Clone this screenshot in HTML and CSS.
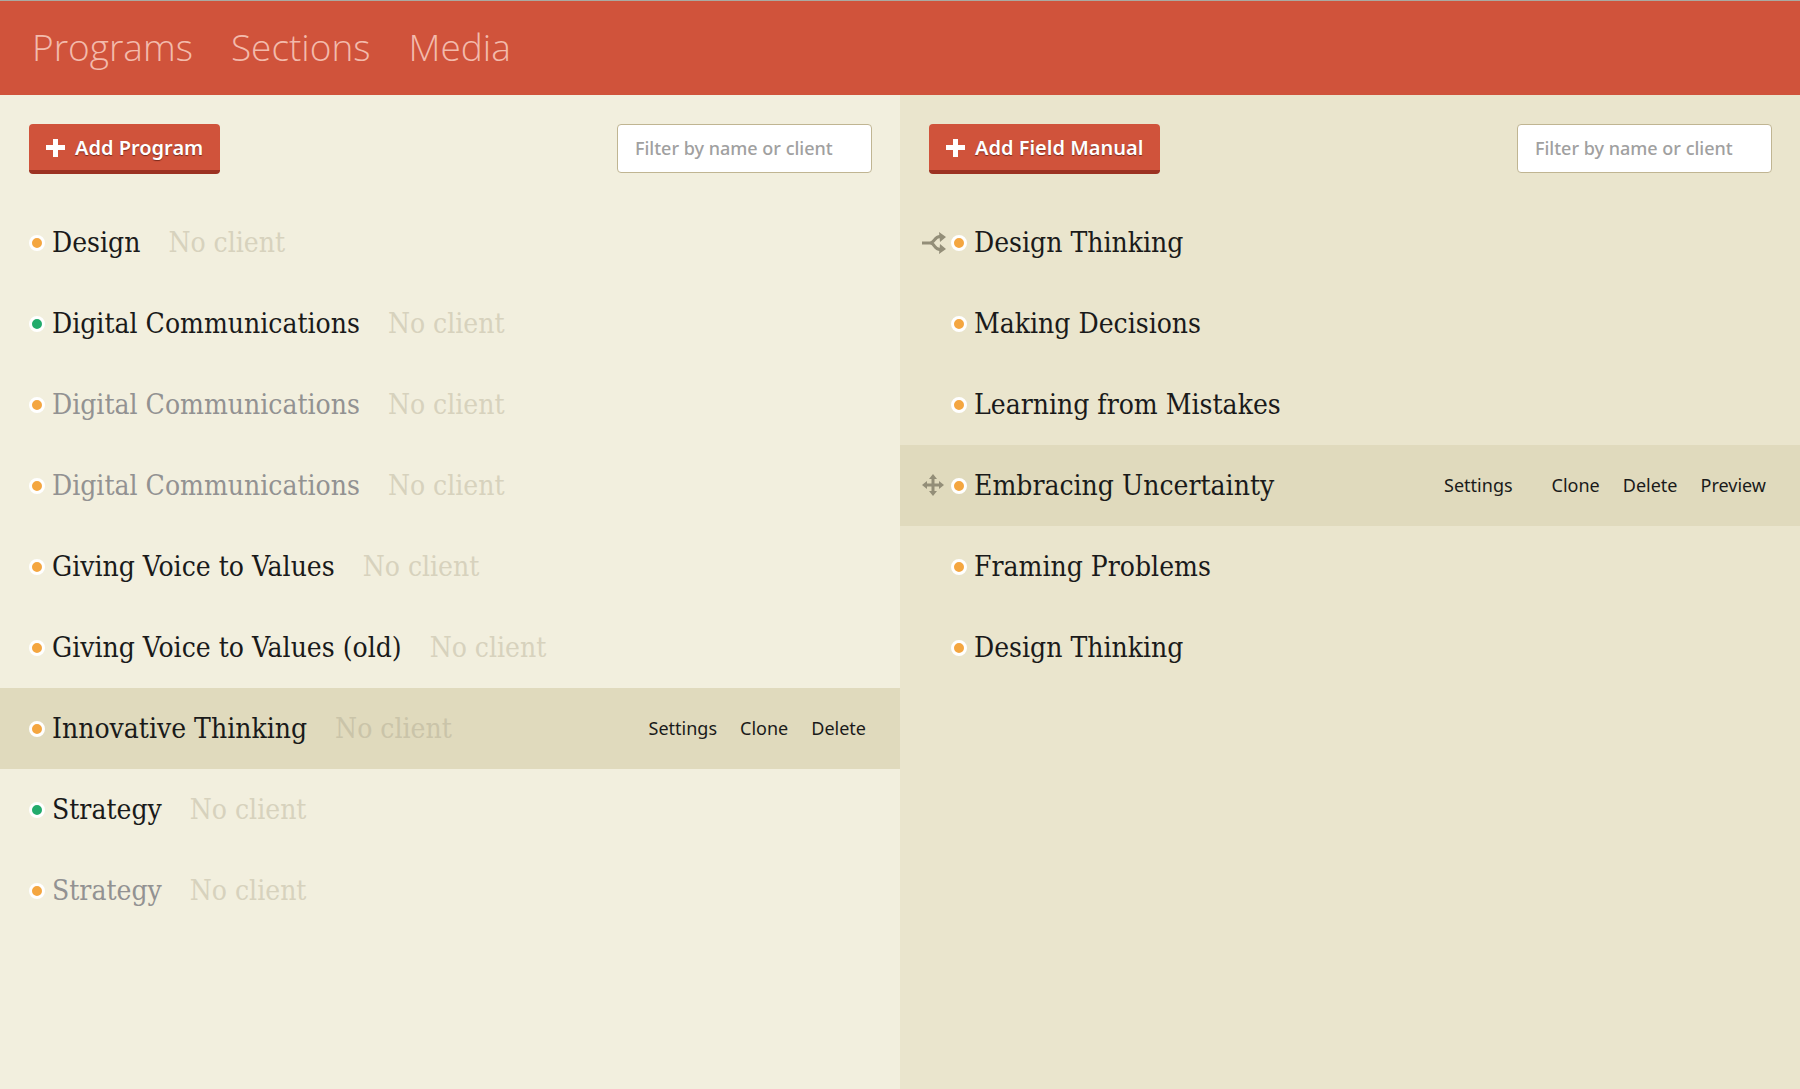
FILE: index.html
```html
<!DOCTYPE html>
<html lang="en">
<head>
<meta charset="utf-8">
<meta name="viewport" content="width=device-width, initial-scale=1">
<title>Programs</title>
<link rel="stylesheet" href="styles.css">
</head>
<body>
<header class="topbar">
  <nav class="topnav" aria-label="Main">
    <a href="#programs">Programs</a>
    <a href="#sections">Sections</a>
    <a href="#media">Media</a>
  </nav>
</header>
<main class="columns">
  <section class="panel" aria-label="Programs">
    <div class="toolbar">
      <button class="add" type="button"><svg class="plus" viewBox="0 0 20 20" aria-hidden="true"><path d="M7 1h5v6h7v5h-7v7H7v-7H0V7h7z"/></svg>Add Program</button>
      <input class="filter" type="text" placeholder="Filter by name or client" aria-label="Filter programs by name or client">
    </div>
    <ul class="list">
      <li class="row"><span class="dot"></span><a class="name" href="#p1">Design</a><span class="client">No client</span></li>
      <li class="row"><span class="dot live"></span><a class="name" href="#p2">Digital Communications</a><span class="client">No client</span></li>
      <li class="row"><span class="dot"></span><a class="name muted" href="#p3">Digital Communications</a><span class="client">No client</span></li>
      <li class="row"><span class="dot"></span><a class="name muted" href="#p4">Digital Communications</a><span class="client">No client</span></li>
      <li class="row"><span class="dot"></span><a class="name" href="#p5">Giving Voice to Values</a><span class="client">No client</span></li>
      <li class="row"><span class="dot"></span><a class="name" href="#p6">Giving Voice to Values (old)</a><span class="client">No client</span></li>
      <li class="row current"><span class="dot"></span><a class="name" href="#p7">Innovative Thinking</a><span class="client">No client</span>
        <span class="actions"><a href="#settings">Settings</a><a href="#clone">Clone</a><a href="#delete">Delete</a></span></li>
      <li class="row"><span class="dot live"></span><a class="name" href="#p8">Strategy</a><span class="client">No client</span></li>
      <li class="row"><span class="dot"></span><a class="name muted" href="#p9">Strategy</a><span class="client">No client</span></li>
    </ul>
  </section>
  <section class="panel manuals" aria-label="Field manuals">
    <div class="toolbar">
      <button class="add" type="button"><svg class="plus" viewBox="0 0 20 20" aria-hidden="true"><path d="M7 1h5v6h7v5h-7v7H7v-7H0V7h7z"/></svg>Add Field Manual</button>
      <input class="filter" type="text" placeholder="Filter by name or client" aria-label="Filter field manuals by name or client">
    </div>
    <ul class="list">
      <li class="row"><span class="mark"><svg viewBox="0 0 24 24" aria-hidden="true"><path class="line" d="M0 12h9M8 12C13 12 12 5.500 18 5.500M8 12C13 12 12 18.500 18 18.500"/><path d="M17 1l7 5-6 5zM18 13l6 5-7 5z"/></svg></span><span class="dot"></span><a class="name" href="#m1">Design Thinking</a></li>
      <li class="row"><span class="mark"></span><span class="dot"></span><a class="name" href="#m2">Making Decisions</a></li>
      <li class="row"><span class="mark"></span><span class="dot"></span><a class="name" href="#m3">Learning from Mistakes</a></li>
      <li class="row current"><span class="mark"><svg viewBox="0 0 24 24" aria-hidden="true"><path class="line" d="M11 3v16M3 11h16"/><path d="M11 0l4 5H7zM11 22l4-5H7zM0 11l5-4v8zM22 11l-5-4v8z"/></svg></span><span class="dot"></span><a class="name" href="#m4">Embracing Uncertainty</a>
        <span class="actions"><a class="apart" href="#settings">Settings</a><a href="#clone">Clone</a><a href="#delete">Delete</a><a href="#preview">Preview</a></span></li>
      <li class="row"><span class="mark"></span><span class="dot"></span><a class="name" href="#m5">Framing Problems</a></li>
      <li class="row"><span class="mark"></span><span class="dot"></span><a class="name" href="#m6">Design Thinking</a></li>
    </ul>
  </section>
</main>
</body>
</html>
```
FILE: styles.css
```css
* { box-sizing: border-box; }

body {
  margin: 0;
  min-height: 100vh;
  display: flex;
  flex-direction: column;
  background: #f2efde;
  color: #1a1a1a;
  font-family: "Noto Sans", sans-serif;
}

a { color: inherit; text-decoration: none; }

.topbar {
  height: 95px;
  padding: 0 32px 2px;
  display: flex;
  align-items: center;
  background: #d0533b;
  border-top: 1px solid #a9aaa2;
}

.topnav {
  display: flex;
  gap: 38px;
  font: 300 37px/48px "Open Sans", sans-serif;
  color: #f3bbac;
}

.columns {
  flex: 1;
  display: grid;
  grid-template-columns: 1fr 1fr;
}

.panel { padding-top: 29px; }
.manuals { background: #eae5cd; }

.toolbar {
  display: flex;
  justify-content: space-between;
  align-items: flex-start;
  padding: 0 28px 0 29px;
}

.add {
  display: flex;
  align-items: center;
  gap: 9px;
  height: 50px;
  padding: 2px 17px 0;
  border: 0;
  border-bottom: 4px solid #9c3222;
  border-radius: 4px;
  background: #d0533b;
  color: #fff;
  font: 600 20px/28px "Noto Sans", sans-serif;
  text-shadow: 0 1px 1px #7a2a1c;
}

.plus { width: 20px; height: 20px; fill: #fff; }

.filter {
  width: 255px;
  height: 49px;
  padding: 0 17px 2px;
  border: 1px solid #c0b592;
  border-radius: 4px;
  background: #fff;
  font: 500 18px/28px "Noto Sans", sans-serif;
}
.filter::placeholder { color: #a0a0a0; opacity: 1; }

.list {
  margin: 28px 0 0;
  padding: 0;
  list-style: none;
}

.row {
  display: flex;
  align-items: center;
  height: 81px;
  padding: 0 34px 0 29px;
  font: 400 28px/40px "DejaVu Serif Condensed", serif;
}
.manuals .row { padding-left: 22px; }
.current { background: #e0dabd; }

.dot {
  width: 16px;
  height: 16px;
  margin-right: 7px;
  border: 3px solid #fff;
  border-radius: 50%;
  background: #f4a640;
}
.live { background: #22ab6c; }

.mark { display: flex; width: 29px; }
.mark svg { width: 24px; height: 24px; fill: #938e78; }
.mark .line { fill: none; stroke: #938e78; stroke-width: 3; }

.muted { color: #929292; }
.client { margin-left: 28px; color: #d7d2bd; }
.current .client { color: #cac4a9; }

.actions {
  display: flex;
  gap: 23px;
  margin-left: auto;
  padding-bottom: 2px;
  font: 400 18px/28px "Noto Sans", sans-serif;
}
.apart { margin-right: 16px; }
```
